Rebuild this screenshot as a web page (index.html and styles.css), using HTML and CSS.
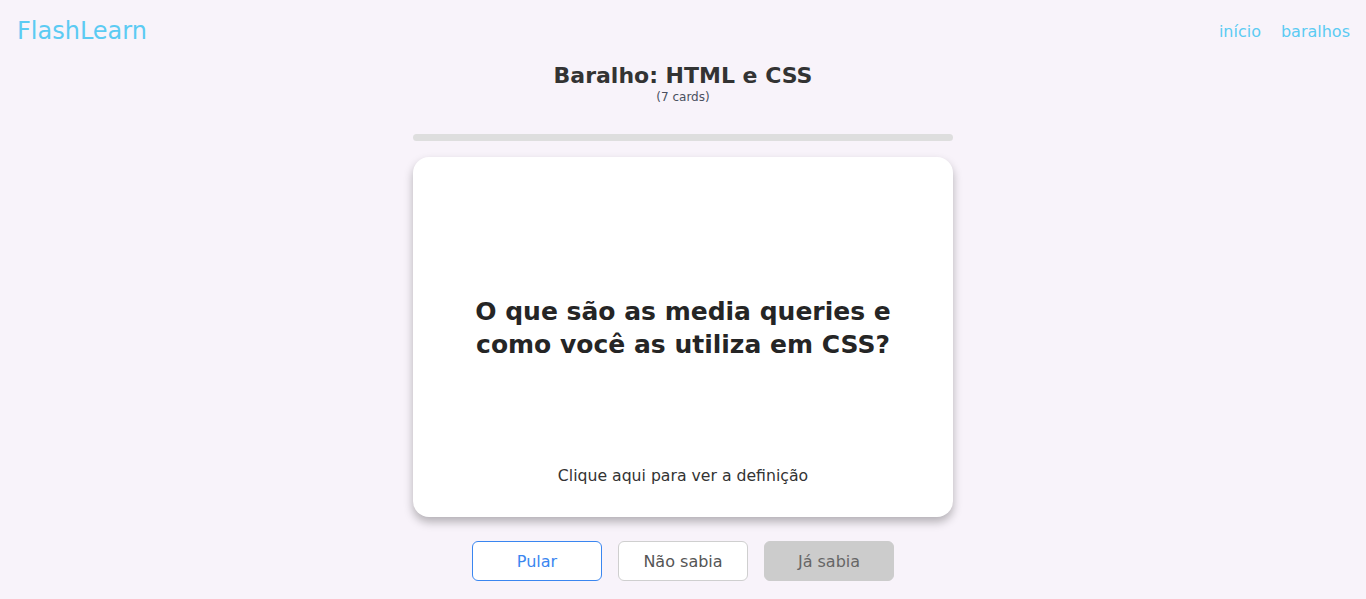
FILE: index.html
```html
<!DOCTYPE html>
<html lang="pt-BR">
<head>
<meta charset="utf-8">
<title>FlashLearn</title>
<link rel="stylesheet" href="styles.css">
</head>
<body>
<header class="topbar">
  <a class="logo" href="#">FlashLearn</a>
  <nav class="nav">
    <a href="#">início</a>
    <a href="#">baralhos</a>
  </nav>
</header>
<main class="study">
  <div class="deck-head">
    <h1 class="deck-title">Baralho: HTML e CSS</h1>
    <div class="deck-count">(7 cards)</div>
  </div>
  <div class="progress"><div class="progress-fill"></div></div>
  <section class="card">
    <div class="card-body">
      <h2 class="question">O que são as media queries e como você as utiliza em CSS?</h2>
    </div>
    <p class="hint">Clique aqui para ver a definição</p>
  </section>
  <div class="actions">
    <button class="btn btn-skip">Pular</button>
    <button class="btn btn-no">Não sabia</button>
    <button class="btn btn-yes">Já sabia</button>
  </div>
</main>
</body>
</html>
```
FILE: styles.css
```css
* { box-sizing: border-box; }
html, body { margin: 0; padding: 0; }
body {
  background: #f8f3fa;
  font-family: "DejaVu Sans", "Noto Sans", sans-serif;
  color: #333;
  height: 599px;
}
.topbar {
  display: flex;
  justify-content: space-between;
  align-items: center;
  height: 62px;
  padding: 0 16px 0 17px;
}
.logo {
  font-size: 24px;
  color: #5ccbf3;
  text-decoration: none;
}
.nav { display: flex; gap: 20px; }
.nav a {
  color: #5ccbf3;
  text-decoration: none;
  font-size: 16px;
}
.study {
  display: flex;
  flex-direction: column;
  align-items: center;
}
.deck-head { text-align: center; }
.deck-title {
  margin: 0;
  font-size: 22px;
  font-weight: 700;
  line-height: 28px;
  color: #333;
}
.deck-count {
  font-size: 12px;
  line-height: 14px;
  color: #4a5060;
}
.progress {
  margin-top: 30px;
  width: 540px;
  height: 7px;
  border-radius: 4px;
  background: #dedede;
}
.progress-fill { width: 0; height: 100%; }
.card {
  margin-top: 16px;
  width: 540px;
  height: 360px;
  background: #fff;
  border-radius: 16px;
  box-shadow: 0 5px 10px rgba(0, 0, 0, 0.28);
  display: flex;
  flex-direction: column;
  align-items: center;
  padding: 0 50px 31px;
}
.card-body {
  flex: 1;
  display: flex;
  align-items: center;
  justify-content: center;
  padding-top: 32px;
}
.question {
  margin: 0;
  text-align: center;
  font-size: 25px;
  line-height: 33px;
  font-weight: 700;
  color: #252525;
}
.hint {
  margin: 0;
  font-size: 15.7px;
  line-height: 20px;
  color: #333;
}
.actions {
  margin-top: 24px;
  display: flex;
  gap: 16px;
}
.btn {
  width: 130px;
  height: 40px;
  border-radius: 6px;
  font-family: inherit;
  font-size: 16px;
  background: #fff;
  cursor: pointer;
}
.btn-skip { border: 1px solid #3a86f0; color: #3a86f0; }
.btn-no { border: 1px solid #cfcfcf; color: #555; }
.btn-yes { border: 1px solid #cccccc; background: #cccccc; color: #666; }
```
